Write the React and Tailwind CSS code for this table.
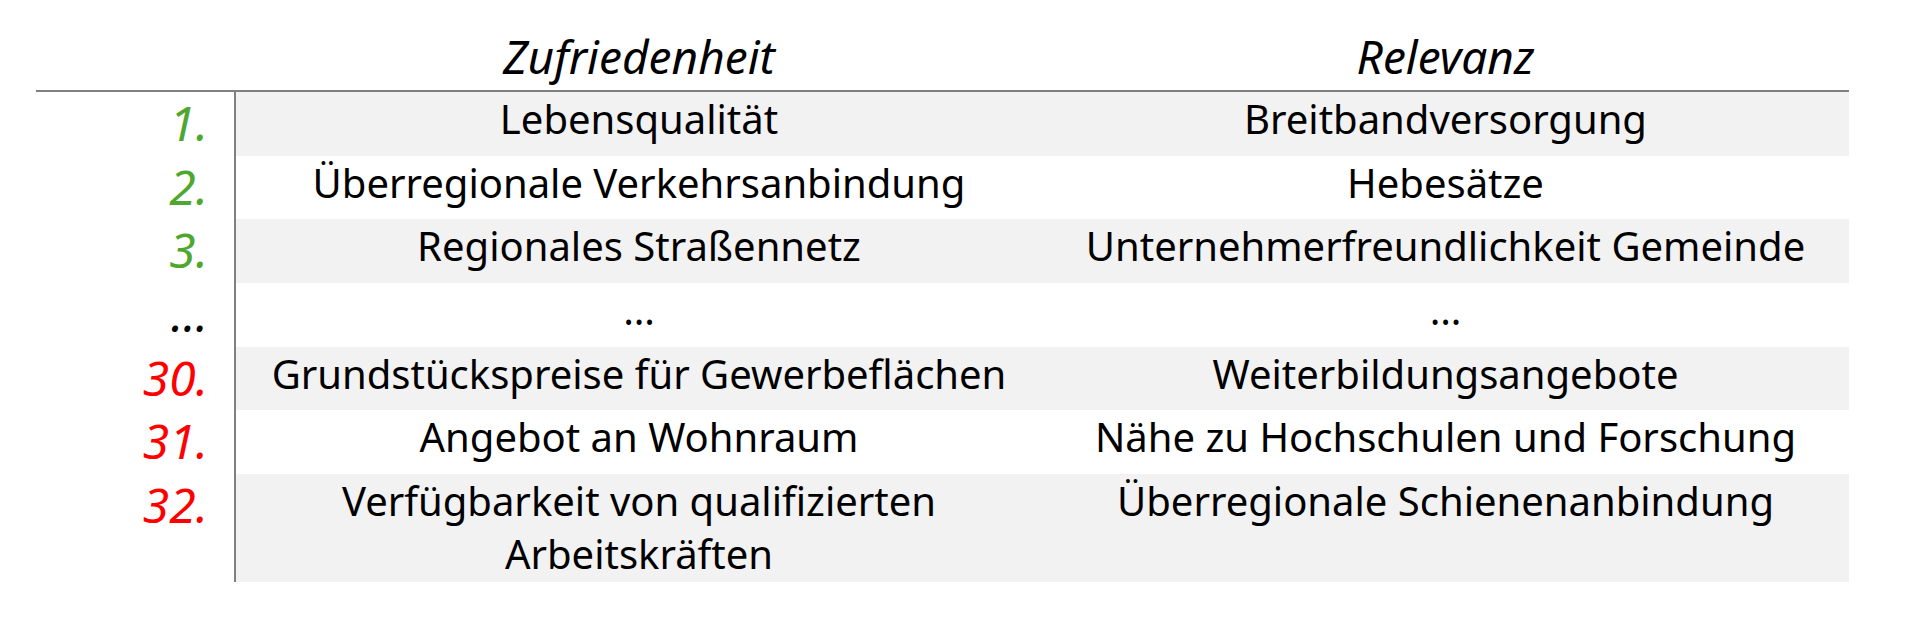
import React from "react";

const rows = [
  { n: "1.", c: "text-[#4ea72e]", a: "Lebensqualität", b: "Breitbandversorgung", gray: true },
  { n: "2.", c: "text-[#4ea72e]", a: "Überregionale Verkehrsanbindung", b: "Hebesätze", gray: false },
  { n: "3.", c: "text-[#4ea72e]", a: "Regionales Straßennetz", b: "Unternehmerfreundlichkeit Gemeinde", gray: true },
  { n: "…", c: "text-black", a: "…", b: "…", gray: false },
  { n: "30.", c: "text-[#ff0000]", a: "Grundstückspreise für Gewerbeflächen", b: "Weiterbildungsangebote", gray: true },
  { n: "31.", c: "text-[#ff0000]", a: "Angebot an Wohnraum", b: "Nähe zu Hochschulen und Forschung", gray: false },
  { n: "32.", c: "text-[#ff0000]", a: "Verfügbarkeit von qualifizierten Arbeitskräften", b: "Überregionale Schienenanbindung", gray: true, tall: true },
];

export default function App() {
  return (
    <div className="w-[1906px] h-[630px] bg-white text-black font-['Noto_Sans',sans-serif]">
      <div className="ml-[36px] w-[1813px]">
        <div className="grid grid-cols-[200px_806px_807px] h-[92px] border-b-2 border-[#808080]">
          <div />
          <div className="pt-[30px] text-center italic text-[46px] leading-[53px]">Zufriedenheit</div>
          <div className="pt-[30px] text-center italic text-[46px] leading-[53px]">Relevanz</div>
        </div>
        {rows.map((r, i) => (
          <div
            key={i}
            className={`grid grid-cols-[200px_806px_807px] ${r.tall ? "h-[108px]" : "h-[63.67px]"}`}
          >
            <div className={`border-r-2 border-[#808080] pr-[26px] text-right italic text-[48px] leading-[62px] ${r.c}`}>
              {r.n}
            </div>
            <div className={`${r.gray ? "bg-[#f2f2f2]" : "bg-white"} px-[10px] text-center text-[40px] leading-[53px]`}>
              {r.a}
            </div>
            <div className={`${r.gray ? "bg-[#f2f2f2]" : "bg-white"} px-[10px] text-center text-[40px] leading-[53px]`}>
              {r.b}
            </div>
          </div>
        ))}
      </div>
    </div>
  );
}
